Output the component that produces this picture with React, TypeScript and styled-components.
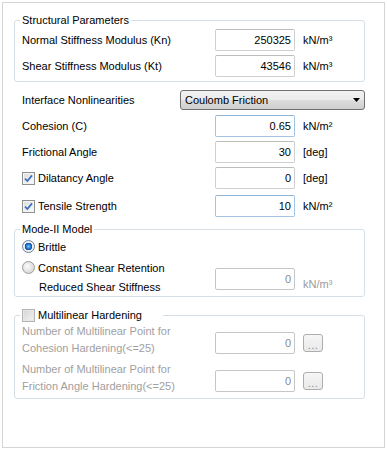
import React from "react";
import styled, { createGlobalStyle } from "styled-components";

const GlobalStyle = createGlobalStyle`
  html, body {
    margin: 0;
    padding: 0;
    background: #ffffff;
  }
  body {
    font-family: "Liberation Sans", Arial, sans-serif;
    font-size: 11px;
    color: #000000;
  }
`;

const Page = styled.div`
  box-sizing: border-box;
  width: 387px;
  height: 451px;
  padding: 2px;
`;

const Frame = styled.div`
  box-sizing: border-box;
  width: 383px;
  height: 446px;
  border: 1px solid #d5d5d5;
  padding: 11px 0 0 11px;
`;

const Group = styled.fieldset<{ $pb?: number; $mt?: number }>`
  box-sizing: border-box;
  width: 351px;
  margin: ${(p) => p.$mt ?? 0}px 0 0 0;
  padding: 0 0 ${(p) => p.$pb ?? 0}px 7px;
  border: 1px solid #d5dfe5;
  border-radius: 3px;
  min-inline-size: auto;
`;

const Legend = styled.legend<{ $pr?: number }>`
  padding: 0 ${(p) => p.$pr ?? 2}px 0 2px;
  margin-left: -2px;
  line-height: 13px;
  height: 13px;
`;

const LegendInner = styled.span`
  display: flex;
  align-items: center;
  gap: 3px;
`;

const Section = styled.div`
  padding-left: 8px;
  width: 343px;
`;

const FieldRow = styled.div<{ $h: number; $mt?: number; $cols?: string }>`
  display: grid;
  grid-template-columns: ${(p) => p.$cols ?? "193px 80px auto"};
  align-items: center;
  height: ${(p) => p.$h}px;
  margin-top: ${(p) => p.$mt ?? 0}px;
`;

const Label = styled.span<{ $disabled?: boolean }>`
  color: ${(p) => (p.$disabled ? "#9d9d9d" : "#000000")};
  white-space: nowrap;
`;

const TwoLine = styled.span<{ $disabled?: boolean }>`
  color: ${(p) => (p.$disabled ? "#a0a0a0" : "#000000")};
  line-height: 17px;
  align-self: start;
`;

const CheckLabel = styled.span`
  display: flex;
  align-items: center;
  gap: 3px;
  white-space: nowrap;
`;

const Box = styled.input<{ $focus?: boolean; $end?: boolean }>`
  box-sizing: border-box;
  width: 80px;
  height: 22px;
  margin: 0;
  padding: 0 3px 1px 0;
  border: 1px solid ${(p) => (p.$focus ? "#a3c4e3" : "#cfcfcf")};
  border-top-color: ${(p) => (p.$focus ? "#8fb5dc" : "#bdbdbd")};
  border-radius: 2px;
  background: #ffffff;
  font-family: "Liberation Sans", Arial, sans-serif;
  font-size: 11px;
  color: #000000;
  text-align: right;
  outline: none;
  align-self: ${(p) => (p.$end ? "end" : "center")};
  margin-bottom: ${(p) => (p.$end ? "3px" : "0")};

  &:disabled {
    color: #8a8a8a;
    border-color: #c6c6c6;
    background: #ffffff;
  }
`;

const Unit = styled.span<{ $disabled?: boolean }>`
  padding-left: 8px;
  color: ${(p) => (p.$disabled ? "#9a9a9a" : "#000000")};
  white-space: nowrap;
`;

const Select = styled.div`
  box-sizing: border-box;
  width: 185px;
  height: 20px;
  display: flex;
  align-items: center;
  justify-content: space-between;
  padding: 0 4px 1px 4px;
  border: 1px solid #707070;
  border-radius: 3px;
  background: linear-gradient(#f2f2f2 0%, #ebebeb 50%, #dddddd 50%, #cfcfcf 100%);
`;

const CheckBox = styled.span<{ $disabled?: boolean }>`
  box-sizing: border-box;
  width: 13px;
  height: 13px;
  display: inline-flex;
  align-items: center;
  justify-content: center;
  border: 1px solid ${(p) => (p.$disabled ? "#b4b4b4" : "#8e8f8f")};
  background: ${(p) =>
    p.$disabled
      ? "linear-gradient(135deg, #d6d6d6, #f2f2f2)"
      : "linear-gradient(135deg, #dcdcdc, #fbfbfb)"};
  box-shadow: inset 0 0 0 1px ${(p) => (p.$disabled ? "#e6e6e6" : "#f4f4f4")};
  flex: none;
`;

const RadioDot = styled.span<{ $on?: boolean }>`
  box-sizing: border-box;
  width: 13px;
  height: 13px;
  border-radius: 50%;
  border: 1px solid ${(p) => (p.$on ? "#6d7f93" : "#9c9c9c")};
  background: ${(p) =>
    p.$on
      ? "radial-gradient(circle at 50% 50%, #7fd0ff 0, #1a6ecb 2.5px, #0f4c97 3.5px, #e9eef3 4px, #f7f7f7 100%)"
      : "radial-gradient(circle at 40% 40%, #fbfbfb 0, #e2e2e2 5px, #cfcfcf 100%)"};
  flex: none;
`;

const RadioRow = styled.span<{ $h: number }>`
  display: flex;
  align-items: center;
  gap: 3px;
  height: ${(p) => p.$h}px;
  white-space: nowrap;
`;

const LeftStack = styled.div`
  display: flex;
  flex-direction: column;
  align-self: stretch;
`;

const SubLabel = styled.span`
  padding-left: 17px;
  height: 18px;
  line-height: 18px;
  white-space: nowrap;
`;

const BottomCell = styled.div<{ $mb: number }>`
  align-self: end;
  margin-bottom: ${(p) => p.$mb}px;
  display: flex;
  align-items: center;
`;

const DotsButton = styled.button`
  box-sizing: border-box;
  width: 20px;
  height: 18px;
  margin: 0 0 5px 8px;
  padding: 4px 0 0 0;
  border: 1px solid #adadad;
  border-radius: 3px;
  background: linear-gradient(#f6f6f6, #e9e9e9);
  font-family: "Liberation Sans", Arial, sans-serif;
  font-size: 11px;
  letter-spacing: 0.5px;
  color: #8c8c8c;
  line-height: 11px;
  text-align: center;
  align-self: end;
`;

const MultiRows = styled.div`
  display: flex;
  flex-direction: column;
  gap: 4px;
  padding-top: 1px;
`;

const Tick = () => (
  <svg width="9" height="9" viewBox="0 0 9 9">
    <path d="M1 4.6 L3.4 7 L8 1.4" fill="none" stroke="#3a6fc0" strokeWidth="1.7" />
  </svg>
);

const Arrow = () => (
  <svg width="7" height="4" viewBox="0 0 7 4">
    <path d="M0 0 H7 L3.5 4 Z" fill="#000000" />
  </svg>
);

interface FieldProps {
  label: React.ReactNode;
  value: string;
  unit: string;
  focus?: boolean;
  h?: number;
  mt?: number;
}

const Field: React.FC<FieldProps> = ({ label, value, unit, focus, h = 26, mt }) => (
  <FieldRow $h={h} $mt={mt}>
    {label}
    <Box readOnly value={value} $focus={focus} />
    <Unit>{unit}</Unit>
  </FieldRow>
);

interface HardeningProps {
  line1: string;
  line2: string;
}

const HardeningRow: React.FC<HardeningProps> = ({ line1, line2 }) => (
  <FieldRow $h={34}>
    <TwoLine $disabled>
      {line1}
      <br />
      {line2}
    </TwoLine>
    <Box disabled value="0" $end />
    <DotsButton disabled>...</DotsButton>
  </FieldRow>
);

export default function App() {
  return (
    <Page>
      <GlobalStyle />
      <Frame>
        <Group $pb={2}>
          <Legend>Structural Parameters</Legend>
          <Field label={<Label>Normal Stiffness Modulus (Kn)</Label>} value="250325" unit="kN/m³" />
          <Field label={<Label>Shear Stiffness Modulus (Kt)</Label>} value="43546" unit="kN/m³" />
        </Group>

        <Section>
          <FieldRow $h={24} $mt={6} $cols="158px 185px">
            <Label>Interface Nonlinearities</Label>
            <Select>
              <span>Coulomb Friction</span>
              <Arrow />
            </Select>
          </FieldRow>
          <Field mt={1} label={<Label>Cohesion (C)</Label>} value="0.65" unit="kN/m²" focus />
          <Field label={<Label>Frictional Angle</Label>} value="30" unit="[deg]" />
          <Field
            label={
              <CheckLabel>
                <CheckBox>
                  <Tick />
                </CheckBox>
                Dilatancy Angle
              </CheckLabel>
            }
            value="0"
            unit="[deg]"
          />
          <Field
            mt={2}
            label={
              <CheckLabel>
                <CheckBox>
                  <Tick />
                </CheckBox>
                Tensile Strength
              </CheckLabel>
            }
            value="10"
            unit="kN/m²"
            focus
          />
        </Section>

        <Group $mt={4}>
          <Legend>Mode-II Model</Legend>
          <RadioRow $h={21}>
            <RadioDot $on />
            Brittle
          </RadioRow>
          <FieldRow $h={39}>
            <LeftStack>
              <RadioRow $h={21}>
                <RadioDot />
                Constant Shear Retention
              </RadioRow>
              <SubLabel>Reduced Shear Stiffness</SubLabel>
            </LeftStack>
            <BottomCell $mb={6}>
              <Box disabled value="0" />
            </BottomCell>
            <BottomCell $mb={6}>
              <Unit $disabled>kN/m³</Unit>
            </BottomCell>
          </FieldRow>
        </Group>

        <Group $mt={12} $pb={3}>
          <Legend $pr={21}>
            <LegendInner>
              <CheckBox $disabled />
              Multilinear Hardening
            </LegendInner>
          </Legend>
          <MultiRows>
            <HardeningRow line1="Number of Multilinear Point for" line2="Cohesion Hardening(<=25)" />
            <HardeningRow line1="Number of Multilinear Point for" line2="Friction Angle Hardening(<=25)" />
          </MultiRows>
        </Group>
      </Frame>
    </Page>
  );
}
